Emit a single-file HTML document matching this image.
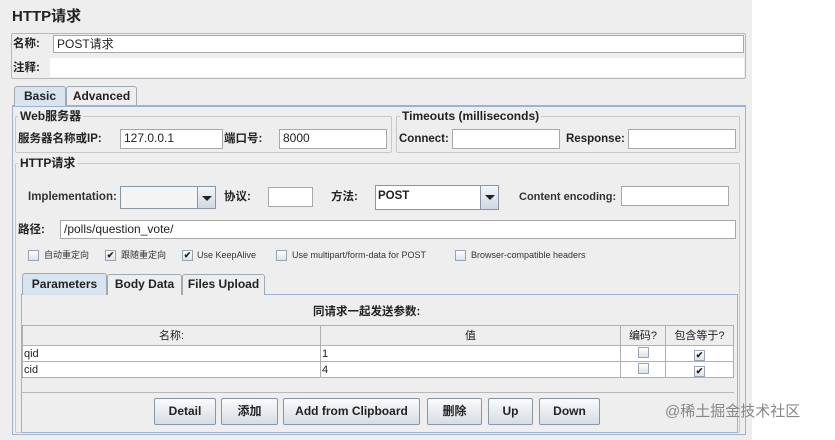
<!DOCTYPE html>
<html><head><meta charset="utf-8"><style>
*{box-sizing:border-box;margin:0;padding:0}
body{width:835px;height:440px;background:#fff;position:relative;overflow:hidden;font-family:"Liberation Sans","Noto Sans CJK SC",sans-serif;font-size:12px;color:#222}
.a{position:absolute;white-space:nowrap;line-height:14px}
.bg{left:0;top:0;width:752px;height:440px;background:#eeeeee}
.f{position:absolute;background:#fff;border:1px solid #a8a8a8;font-size:12px;padding:1px 3px;line-height:15px}
.b{font-weight:bold;font-size:11.5px}
.g{position:absolute;border:1px solid #c8c8c8;border-radius:2px}
.gl{position:absolute;background:#eeeeee;padding:0 2px;font-weight:bold;font-size:12px;line-height:13px;white-space:nowrap}
.tab{position:absolute;border:1px solid #a0a8b4;border-bottom:none;background:#eeeeee;font-weight:bold;font-size:12px;text-align:center;border-radius:3px 3px 0 0;white-space:nowrap}
.tab.s{background:#d8e4f0}
.cb{position:absolute;width:11px;height:11px;border:1px solid #9aa4b0;background:linear-gradient(#fff,#dde3ea);font-size:9px;line-height:9px;text-align:center;font-weight:bold}
.sm{position:absolute;font-size:9px;color:#333;line-height:11px;white-space:nowrap}
.btn{position:absolute;border:1px solid #8a96a4;background:linear-gradient(#fafbfc,#d6dde6);font-weight:bold;font-size:12px;text-align:center;line-height:25px;border-radius:2px}
.combo{position:absolute;border:1px solid #8a96a4;background:#f4f4f4}
.arr{position:absolute;top:0;right:0;width:18px;height:100%;border-left:1px solid #8a96a4;background:linear-gradient(#f4f6f8,#d0d8e2)}
.arr:after{content:"";position:absolute;left:4px;top:9px;border:5px solid transparent;border-top:5px solid #222;border-bottom:0}
td,th{border:1px solid #b0b0b0;font-size:11px;font-weight:normal;padding:0 1px;height:16px;line-height:14px}
</style></head><body>
<div class="a bg"></div>
<div class="a b" style="left:12px;top:8px;font-size:15px;line-height:18px">HTTP请求</div>
<div class="g" style="left:11px;top:33px;width:735px;height:46px;border-color:#b8b8b8"></div>
<div class="a b" style="left:13px;top:37px">名称:</div>
<div class="f" style="left:53px;top:35px;width:691px;height:18px">POST请求</div>
<div class="a b" style="left:13px;top:61px">注释:</div>
<div class="a" style="left:50px;top:58px;width:694px;height:19px;background:#fff"></div>

<div class="a" style="left:12px;top:105px;width:734px;height:330px;border:1px solid #9db2cc;border-top:2px solid #9db2cc"></div>
<div class="tab s" style="left:14px;top:86px;width:52px;height:20px;line-height:18px">Basic</div>
<div class="tab" style="left:66px;top:86px;width:71px;height:19px;line-height:18px">Advanced</div>

<div class="g" style="left:15px;top:116px;width:377px;height:37px"></div>
<div class="gl" style="left:18px;top:110px">Web服务器</div>
<div class="a b" style="left:18px;top:132px">服务器名称或IP:</div>
<div class="f" style="left:120px;top:129px;width:103px;height:20px">127.0.0.1</div>
<div class="a b" style="left:224px;top:132px">端口号:</div>
<div class="f" style="left:279px;top:129px;width:108px;height:20px">8000</div>

<div class="g" style="left:396px;top:116px;width:344px;height:37px"></div>
<div class="gl" style="left:400px;top:110px">Timeouts (milliseconds)</div>
<div class="a b" style="left:399px;top:132px">Connect:</div>
<div class="f" style="left:452px;top:129px;width:108px;height:20px"></div>
<div class="a b" style="left:566px;top:132px">Response:</div>
<div class="f" style="left:628px;top:129px;width:108px;height:20px"></div>

<div class="g" style="left:15px;top:163px;width:725px;height:270px"></div>
<div class="gl" style="left:18px;top:157px">HTTP请求</div>
<div class="a b" style="left:28px;top:190px;color:#333">Implementation:</div>
<div class="combo" style="left:120px;top:186px;width:96px;height:23px"><div class="arr"></div></div>
<div class="a b" style="left:224px;top:190px">协议:</div>
<div class="f" style="left:268px;top:187px;width:45px;height:20px"></div>
<div class="a b" style="left:331px;top:190px">方法:</div>
<div class="combo" style="left:375px;top:185px;width:124px;height:25px;background:#fff"><span style="position:absolute;left:2px;top:4px;font-weight:bold;font-size:11.5px">POST</span><div class="arr"></div></div>
<div class="a b" style="left:519px;top:190px;color:#333;font-size:11px">Content encoding:</div>
<div class="f" style="left:621px;top:186px;width:108px;height:20px"></div>
<div class="a b" style="left:18px;top:223px">路径:</div>
<div class="f" style="left:60px;top:220px;width:676px;height:19px">/polls/question_vote/</div>

<div class="cb" style="left:28px;top:250px"></div><div class="sm" style="left:44px;top:250px">自动重定向</div>
<div class="cb" style="left:105px;top:250px">✔</div><div class="sm" style="left:121px;top:250px">跟随重定向</div>
<div class="cb" style="left:182px;top:250px">✔</div><div class="sm" style="left:197px;top:250px">Use KeepAlive</div>
<div class="cb" style="left:276px;top:250px"></div><div class="sm" style="left:292px;top:250px">Use multipart/form-data for POST</div>
<div class="cb" style="left:455px;top:250px"></div><div class="sm" style="left:471px;top:250px">Browser-compatible headers</div>

<div class="a" style="left:21px;top:294px;width:717px;height:139px;border:1px solid #9db2cc"></div>
<div class="tab s" style="left:22px;top:273px;width:85px;height:22px;line-height:20px">Parameters</div>
<div class="tab" style="left:107px;top:274px;width:75px;height:21px;line-height:19px">Body Data</div>
<div class="tab" style="left:182px;top:274px;width:83px;height:21px;line-height:19px">Files Upload</div>
<div class="a b" style="left:313px;top:305px">同请求一起发送参数:</div>
<table class="a" style="left:22px;top:325px;width:712px;border-collapse:collapse;background:#fff">
<tr style="background:#eeeeee"><th style="width:298px;height:20px">名称:</th><th style="width:300px">值</th><th style="width:45px">编码?</th><th>包含等于?</th></tr>
<tr><td>qid</td><td>1</td><td style="text-align:center"><span class="cb" style="position:relative;display:inline-block;top:1px"></span></td><td style="text-align:center"><span class="cb" style="position:relative;display:inline-block;top:1px">✔</span></td></tr>
<tr><td>cid</td><td>4</td><td style="text-align:center"><span class="cb" style="position:relative;display:inline-block;top:1px"></span></td><td style="text-align:center"><span class="cb" style="position:relative;display:inline-block;top:1px">✔</span></td></tr>
</table>
<div class="a" style="left:22px;top:392px;width:712px;height:1px;background:#b8b8b8"></div>
<div class="btn" style="left:154px;top:398px;width:62px;height:27px">Detail</div>
<div class="btn" style="left:221px;top:398px;width:57px;height:27px">添加</div>
<div class="btn" style="left:283px;top:398px;width:137px;height:27px">Add from Clipboard</div>
<div class="btn" style="left:427px;top:398px;width:55px;height:27px">删除</div>
<div class="btn" style="left:488px;top:398px;width:45px;height:27px">Up</div>
<div class="btn" style="left:539px;top:398px;width:61px;height:27px">Down</div>
<div class="a" style="left:665px;top:403px;font-size:15px;line-height:18px;color:#888">@稀土掘金技术社区</div>
</body></html>
